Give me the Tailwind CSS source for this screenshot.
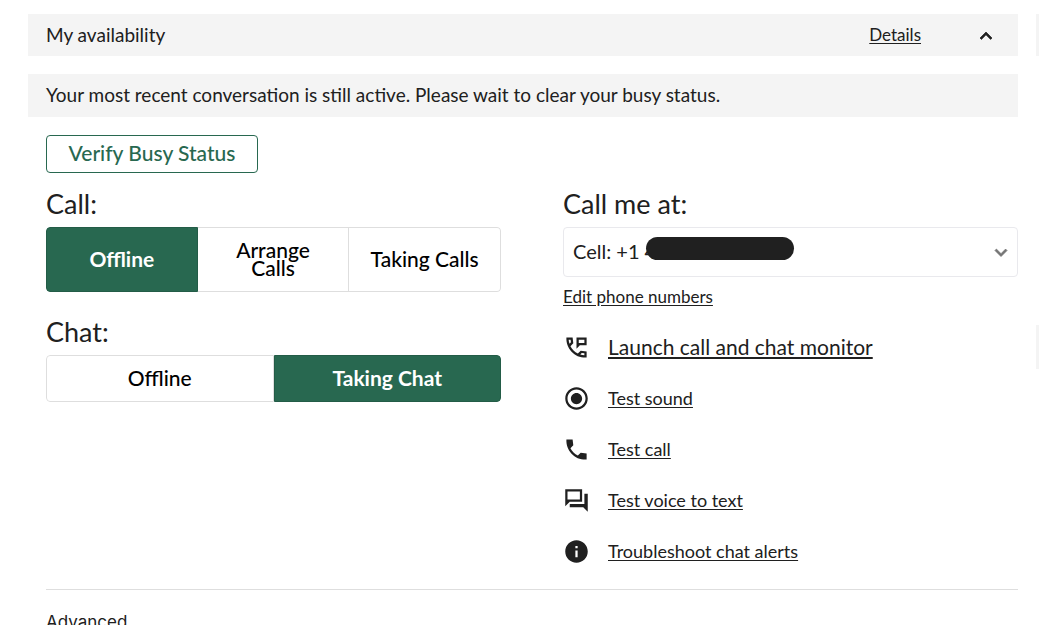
<!DOCTYPE html>
<html lang="en">
  <head>
    <meta charset="UTF-8" />
    <meta name="viewport" content="width=device-width, initial-scale=1.0" />
    <script src="https://cdn.jsdelivr.net/npm/@tailwindcss/browser@4"></script>
    <title>My availability</title>
  </head>
  <body class="bg-white font-[Lato,sans-serif] text-[#202020]">
    <div class="flex h-screen gap-[18px] overflow-hidden pt-[14px] pl-7">
      <main class="min-w-0 flex-1">
        <header class="flex h-[42px] items-center bg-[#f4f4f4] pr-5 pl-[18px]">
          <h1 class="flex-1 text-[19px] leading-6">My availability</h1>
          <a href="#" class="mr-[53px] text-[17px] leading-6 underline underline-offset-2">Details</a>
          <button type="button" aria-label="Collapse">
            <svg class="size-6" viewBox="0 0 24 24" fill="currentColor">
              <path d="M12 9l-6 6 1.41 1.41L12 11.83l4.59 4.58L18 15z" stroke="currentColor" stroke-width=".7" />
            </svg>
          </button>
        </header>

        <p class="mt-[18px] flex h-[43px] items-center bg-[#f4f4f4] px-[18px] pb-[2px] text-[19px] leading-6">
          Your most recent conversation is still active. Please wait to clear your busy status.
        </p>

        <div class="pl-[18px]">
          <button type="button" class="mt-[18px] mb-[15px] block h-[38px] w-[212px] rounded border border-[#286850] pb-[2px] text-[21px] leading-6 font-medium text-[#286850]">
            Verify Busy Status
          </button>

          <div class="grid grid-cols-2 gap-[62px]">
            <section>
              <h2 class="mb-[7px] text-[27px] leading-8">Call:</h2>
              <div class="grid h-[65px] grid-cols-3 overflow-hidden rounded text-[21px] leading-[18px] font-medium text-black">
                <button type="button" class="rounded-l border border-[#235c47] bg-[#286850] pb-[2px] font-bold text-white">Offline</button>
                <button type="button" class="border-y border-r border-[#dedede] px-6 pb-[2px]">Arrange Calls</button>
                <button type="button" class="rounded-r border-y border-r border-[#dedede] pb-[2px]">Taking Calls</button>
              </div>

              <h2 class="mt-6 mb-[7px] text-[27px] leading-8">Chat:</h2>
              <div class="grid h-[47px] grid-cols-2 overflow-hidden rounded text-[21px] leading-[18px] font-medium text-black">
                <button type="button" class="rounded-l border border-[#dedede] pb-[2px]">Offline</button>
                <button type="button" class="rounded-r border border-[#235c47] bg-[#286850] pb-[2px] font-bold text-white">Taking Chat</button>
              </div>
            </section>

            <section>
              <h2 class="mb-[7px] text-[27px] leading-8"><label for="phone">Call me at:</label></h2>
              <div class="relative">
                <select id="phone" class="block h-[50px] w-full appearance-none rounded border border-[#e9e9ed] bg-white pr-10 pb-[2px] pl-[9px] text-[20px] leading-6">
                  <option>Cell: +1 4</option>
                </select>
                <!-- hides the rest of the number -->
                <span class="absolute top-[10px] left-[83px] h-[23px] w-[148px] rounded-full bg-[#202020]"></span>
                <svg class="pointer-events-none absolute top-[13px] right-[5px] size-6 text-[#757575]" viewBox="0 0 24 24" fill="currentColor">
                  <path d="M16.59 9.09L12 13.67 7.41 9.09 6 10.5l6 6 6-6z" stroke="currentColor" stroke-width=".8" />
                </svg>
              </div>
              <a href="#" class="mt-[10px] block w-fit text-[17px] leading-5 underline underline-offset-2">Edit phone numbers</a>

              <ul class="mt-7 flex flex-col gap-[27px] text-[18px] leading-6">
                <li class="flex h-6 items-center gap-[18px]">
                  <svg class="size-[27px]" viewBox="0 0 24 24" fill="currentColor" fill-rule="evenodd">
                    <path d="M12 3v10l3-3h6V3h-9zm7 5h-5V5h5v3z" />
                    <path d="M21 15.46l-5.27-.61-2.52 2.52c-2.83-1.44-5.15-3.75-6.59-6.59l2.53-2.53L8.54 3H3.03C2.45 13.18 10.82 21.55 21 20.97v-5.51zM5.03 5h1.72l.3 2.35-1.24 1.24C5.37 7.45 5.1 6.25 5.03 5zM19 18.97c-1.25-.1-2.45-.4-3.6-.8l1.25-1.25 2.35.28z" />
                  </svg>
                  <a href="#" class="text-[21px] underline decoration-2 underline-offset-2">Launch call and chat monitor</a>
                </li>
                <li class="flex h-6 items-center gap-[18px]">
                  <svg class="size-[27px]" viewBox="0 0 24 24" fill="currentColor">
                    <path d="M12 7c-2.76 0-5 2.24-5 5s2.24 5 5 5 5-2.24 5-5-2.24-5-5-5zm0-5C6.48 2 2 6.48 2 12s4.48 10 10 10 10-4.48 10-10S17.52 2 12 2zm0 18c-4.42 0-8-3.58-8-8s3.58-8 8-8 8 3.58 8 8-3.58 8-8 8z" />
                  </svg>
                  <a href="#" class="underline underline-offset-2">Test sound</a>
                </li>
                <li class="flex h-6 items-center gap-[18px]">
                  <svg class="size-[27px]" viewBox="0 0 24 24" fill="currentColor">
                    <path d="M21 15.46l-5.27-.61-2.52 2.52c-2.83-1.44-5.15-3.75-6.59-6.59l2.53-2.53L8.54 3H3.03C2.45 13.18 10.82 21.55 21 20.97v-5.51z" />
                  </svg>
                  <a href="#" class="underline underline-offset-2">Test call</a>
                </li>
                <li class="flex h-6 items-center gap-[18px]">
                  <svg class="size-[27px]" viewBox="0 0 24 24" fill="currentColor">
                    <path d="M15 4v7H4V4h11m2-2H2v15l4-4h11V2zm5 4h-3v9H6v3h12l4 4V6z" />
                  </svg>
                  <a href="#" class="underline underline-offset-2">Test voice to text</a>
                </li>
                <li class="flex h-6 items-center gap-[18px]">
                  <svg class="size-[27px]" viewBox="0 0 24 24" fill="currentColor">
                    <path d="M12 2C6.48 2 2 6.48 2 12s4.48 10 10 10 10-4.48 10-10S17.52 2 12 2zm1 15h-2v-6h2v6zm0-8h-2V7h2v2z" />
                  </svg>
                  <a href="#" class="underline underline-offset-2">Troubleshoot chat alerts</a>
                </li>
              </ul>
            </section>
          </div>

          <hr class="mt-[26px] border-[#dedede]" />
          <h2 class="mt-5 font-[Inter,sans-serif] text-[17px] leading-6">Advanced</h2>
        </div>
      </main>

      <!-- edge of the next column -->
      <aside class="w-[3px]">
        <div class="h-[42px] bg-[#f4f4f4]"></div>
        <div class="mt-[269px] h-11 bg-[#f4f4f4]"></div>
      </aside>
    </div>
  </body>
</html>
